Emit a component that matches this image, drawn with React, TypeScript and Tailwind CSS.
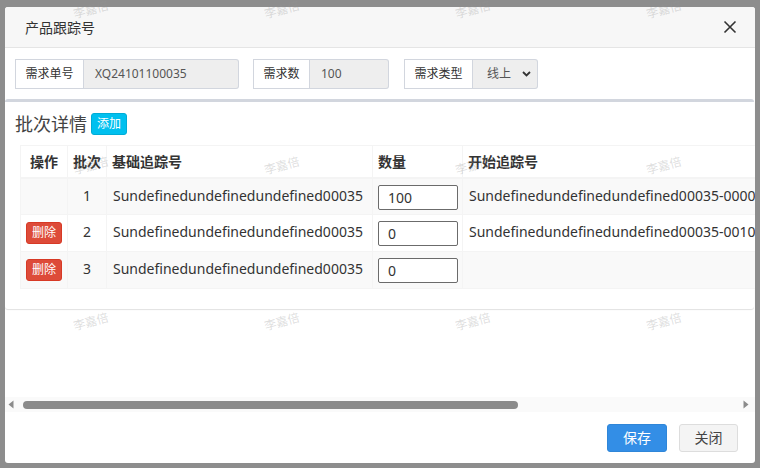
import React from "react";

const BASE = "Sundefinedundefinedundefined00035";

const rows = [
  { del: false, no: 1, qty: "100", start: BASE + "-00001", end: BASE + "-00100" },
  { del: true, no: 2, qty: "0", start: BASE + "-00101", end: BASE + "-00100" },
  { del: true, no: 3, qty: "0", start: "", end: "" },
];

function Triangle({ dir }: { dir: "left" | "right" }) {
  return (
    <svg width="6" height="9" viewBox="0 0 6 9">
      {dir === "left" ? (
        <path d="M5.5 0.5 L0.5 4.5 L5.5 8.5 Z" fill="#8b8b8b" />
      ) : (
        <path d="M0.5 0.5 L5.5 4.5 L0.5 8.5 Z" fill="#8b8b8b" />
      )}
    </svg>
  );
}

export default function App() {
  const wm = Array.from({ length: 12 });
  return (
    <div className="relative w-[760px] h-[468px] overflow-hidden bg-[#8d8d8d] pt-[7px] px-[5px] font-['Noto_Sans','Noto_Sans_CJK_SC',sans-serif] text-[#333]">
      <div className="w-[750px] h-[456px] bg-white rounded-[3px] flex flex-col overflow-hidden">
        {/* header */}
        <div className="h-[41px] shrink-0 bg-[#f7f7f7] border-b border-[#e5e5e5] flex items-center justify-between pl-[20px] pr-[18px]">
          <span className="text-[14px] text-[#333]">产品跟踪号</span>
          <svg width="14" height="14" viewBox="0 0 14 14">
            <path d="M1.5 1.5 L12.5 12.5 M12.5 1.5 L1.5 12.5" stroke="#333" strokeWidth="1.6" />
          </svg>
        </div>

        {/* body */}
        <div className="flex-1 flex flex-col min-h-0">
          <div className="flex-1 overflow-hidden pt-[11px]">
            {/* form row */}
            <div className="flex items-center px-[10px] h-[30px] text-[12px]">
              <div className="flex h-[30px]">
                <div className="w-[69px] h-full border border-[#d2d6de] bg-white flex items-center justify-center text-[#333]">需求单号</div>
                <div className="w-[155px] h-full border-y border-r border-[#d2d6de] rounded-r-[3px] bg-[#eeeeee] flex items-center pl-[11px] text-[#555]">XQ24101100035</div>
              </div>
              <div className="flex h-[30px] ml-[14px]">
                <div className="w-[57px] h-full border border-[#d2d6de] bg-white flex items-center justify-center text-[#333]">需求数</div>
                <div className="w-[79px] h-full border-y border-r border-[#d2d6de] rounded-r-[3px] bg-[#eeeeee] flex items-center pl-[11px] text-[#555]">100</div>
              </div>
              <div className="flex h-[30px] ml-[15px]">
                <div className="w-[69px] h-full border border-[#d2d6de] bg-white flex items-center justify-center text-[#333]">需求类型</div>
                <div className="w-[65px] h-full border-y border-r border-[#d2d6de] rounded-r-[3px] bg-[#eeeeee] flex items-center justify-between pl-[14px] pr-[6px] text-[#555]">
                  <span>线上</span>
                  <svg width="9" height="6" viewBox="0 0 9 6">
                    <path d="M1 1 L4.5 4.5 L8 1" stroke="#333" strokeWidth="1.8" fill="none" />
                  </svg>
                </div>
              </div>
            </div>

            {/* box */}
            <div className="mt-[10px] w-[749px] border-t-[3px] border-[#d2d6de] rounded-[3px] bg-white shadow-[0_1px_1px_rgba(0,0,0,0.12)]">
              <div className="h-[43px] flex items-center pl-[10px] gap-[4px]">
                <span className="text-[18px] text-[#444] leading-none">批次详情</span>
                <span className="h-[22px] w-[36px] rounded-[3px] bg-[#00c0ef] border border-[#00acd6] text-white text-[12px] flex items-center justify-center">添加</span>
              </div>
              <div className="pl-[15px] pb-[20px]">
                <table className="table-fixed border-collapse w-[1072px] text-[14px] text-[#333]">
                  <colgroup>
                    <col className="w-[47px]" />
                    <col className="w-[39px]" />
                    <col className="w-[266px]" />
                    <col className="w-[90px]" />
                    <col className="w-[315px]" />
                    <col className="w-[315px]" />
                  </colgroup>
                  <thead>
                    <tr className="h-[32px] bg-white">
                      <th className="border border-[#f4f4f4] border-b-2 font-bold text-center">操作</th>
                      <th className="border border-[#f4f4f4] border-b-2 font-bold text-center">批次</th>
                      <th className="border border-[#f4f4f4] border-b-2 font-bold text-left pl-[5px]">基础追踪号</th>
                      <th className="border border-[#f4f4f4] border-b-2 font-bold text-left pl-[5px]">数量</th>
                      <th className="border border-[#f4f4f4] border-b-2 font-bold text-left pl-[5px]">开始追踪号</th>
                      <th className="border border-[#f4f4f4] border-b-2 font-bold text-left pl-[5px]">结束追踪号</th>
                    </tr>
                  </thead>
                  <tbody>
                    {rows.map((r, i) => (
                      <tr key={r.no} className={(i % 2 === 0 ? "bg-[#f9f9f9] " : "bg-white ") + "h-[37px]"}>
                        <td className="border border-[#f4f4f4] align-top pt-[6px] text-center">
                          {r.del ? (
                            <span className="inline-flex h-[22px] w-[36px] rounded-[3px] bg-[#dd4b39] border border-[#d73925] text-white text-[12px] items-center justify-center">删除</span>
                          ) : null}
                        </td>
                        <td className="border border-[#f4f4f4] align-top pt-[7px] leading-[20px] text-center">{r.no}</td>
                        <td className="border border-[#f4f4f4] align-top pt-[7px] leading-[20px] pl-[6px] whitespace-nowrap overflow-hidden">{BASE}</td>
                        <td className="border border-[#f4f4f4] align-top pt-[6px] pl-[5px]">
                          <input
                            readOnly
                            value={r.qty}
                            className="w-[80px] h-[25px] border border-[#6b6b6b] rounded-[2px] bg-white px-[9px] text-[14px] text-[#333] outline-none"
                          />
                        </td>
                        <td className="border border-[#f4f4f4] align-top pt-[7px] leading-[20px] pl-[6px] whitespace-nowrap overflow-hidden">{r.start}</td>
                        <td className="border border-[#f4f4f4] align-top pt-[7px] leading-[20px] pl-[6px] whitespace-nowrap overflow-hidden">{r.end}</td>
                      </tr>
                    ))}
                  </tbody>
                </table>
              </div>
            </div>
          </div>

          {/* horizontal scrollbar */}
          <div className="h-[15px] shrink-0 bg-[#fafafa] flex items-center pl-[3px] pr-[6px]">
            <Triangle dir="left" />
            <div className="ml-[9px] w-[495px] h-[8px] rounded-full bg-[#8b8b8b]" />
            <div className="flex-1" />
            <Triangle dir="right" />
          </div>
        </div>

        {/* footer */}
        <div className="h-[51px] shrink-0 flex items-center justify-end gap-[12px] pr-[17px]">
          <button className="w-[60px] h-[28px] rounded-[3px] bg-[#338ee6] border border-[#2f86d8] text-white text-[14px]">保存</button>
          <button className="w-[59px] h-[28px] rounded-[3px] bg-[#f4f4f4] border border-[#dddddd] text-[#444] text-[14px]">关闭</button>
        </div>
      </div>

      {/* watermark overlay */}
      <div className="absolute inset-0 pointer-events-none overflow-hidden">
        <div className="grid grid-cols-[repeat(4,191px)] auto-rows-[156px] ml-[-4px] mt-[-68px]">
          {wm.map((_, i) => (
            <div key={i} className="flex items-center justify-center">
              <span className="-rotate-[15deg] text-[12px] text-[rgba(150,150,150,0.32)]">李嘉倍</span>
            </div>
          ))}
        </div>
      </div>
    </div>
  );
}
